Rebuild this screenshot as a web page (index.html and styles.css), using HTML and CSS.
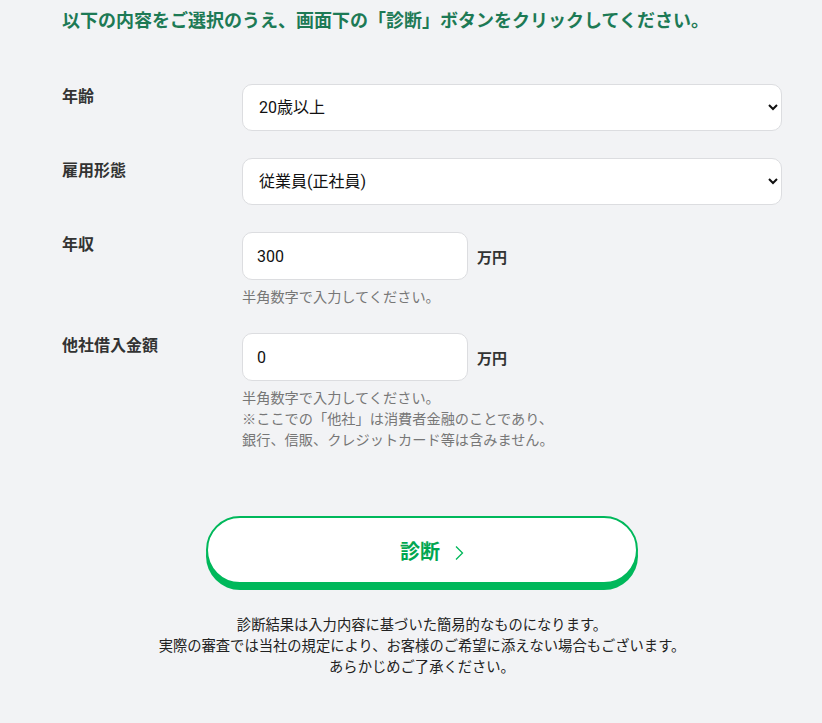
FILE: index.html
```html
<!DOCTYPE html>
<html lang="ja">
<head>
<meta charset="utf-8">
<title>診断</title>
<link rel="stylesheet" href="styles.css">
</head>
<body>
<main class="page">
  <h1 class="lead">以下の内容をご選択のうえ、画面下の「診断」ボタンをクリックしてください。</h1>

  <form class="form">
    <div class="row">
      <div class="label">年齢</div>
      <div class="field">
        <select class="select">
          <option>20歳以上</option>
        </select>
      </div>
    </div>

    <div class="row">
      <div class="label">雇用形態</div>
      <div class="field">
        <select class="select">
          <option>従業員(正社員)</option>
        </select>
      </div>
    </div>

    <div class="row row-help">
      <div class="label">年収</div>
      <div class="field">
        <div class="inline">
          <input class="input" type="text" value="300">
          <span class="unit">万円</span>
        </div>
        <p class="help">半角数字で入力してください。</p>
      </div>
    </div>

    <div class="row">
      <div class="label">他社借入金額</div>
      <div class="field">
        <div class="inline">
          <input class="input" type="text" value="0">
          <span class="unit">万円</span>
        </div>
        <p class="help">半角数字で入力してください。<br>※ここでの「他社」は消費者金融のことであり、<br>銀行、信販、クレジットカード等は含みません。</p>
      </div>
    </div>

    <div class="actions">
      <button type="button" class="btn">
        <span class="btn-text">診断</span>
        <svg class="btn-chev" width="9" height="16" viewBox="0 0 9 16" aria-hidden="true"><path d="M1 1.5 L7.5 8 L1 14.5" fill="none" stroke="#00b85b" stroke-width="1.3"/></svg>
      </button>
    </div>

    <p class="note">診断結果は入力内容に基づいた簡易的なものになります。<br>実際の審査では当社の規定により、お客様のご希望に添えない場合もございます。<br>あらかじめご了承ください。</p>
  </form>
</main>
</body>
</html>
```

FILE: styles.css
```css
html, body {
  margin: 0;
  padding: 0;
  background: #f2f3f5;
}

body {
  font-family: Roboto, "Noto Sans CJK JP", sans-serif;
  color: #333;
}

.page {
  width: 720px;
  padding: 9px 0 40px 62px;
}

.lead {
  margin: 0;
  font-size: 18px;
  line-height: 24px;
  font-weight: 700;
  color: #1d7a55;
  letter-spacing: 0;
}

.form {
  margin-top: 51px;
  width: 720px;
}

.row {
  display: flex;
  margin-bottom: 27px;
}

.row-help {
  margin-bottom: 25px;
}

.row:last-of-type {
  margin-bottom: 0;
}

.label {
  width: 180px;
  flex: none;
  font-size: 16px;
  line-height: 24px;
  padding-top: 1px;
  font-weight: 600;
  color: #333;
}

.field {
  flex: 1;
  min-width: 0;
}

.select {
  display: block;
  width: 540px;
  height: 47px;
  box-sizing: border-box;
  border: 1px solid #dcdde0;
  border-radius: 10px;
  background: #fff;
  padding: 0 4px 0 12px;
  font-family: Roboto, "Noto Sans CJK JP", sans-serif;
  font-size: 16px;
  color: #111;
}

.inline {
  display: flex;
  align-items: center;
  gap: 9px;
}

.input {
  width: 226px;
  height: 48px;
  box-sizing: border-box;
  border: 1px solid #dcdde0;
  border-radius: 10px;
  background: #fff;
  padding: 0 14px;
  font-family: Roboto, "Noto Sans CJK JP", sans-serif;
  font-size: 16px;
  color: #111;
  outline: none;
}

.unit {
  font-size: 15px;
  font-weight: 700;
  color: #333;
}

.help {
  margin: 7px 0 0;
  font-size: 14.2px;
  line-height: 21px;
  color: #777;
}

.actions {
  display: flex;
  justify-content: center;
  margin-top: 65px;
  width: 720px;
}

.btn {
  width: 432px;
  height: 68px;
  box-sizing: border-box;
  border: 2px solid #00b85b;
  border-radius: 34px;
  background: #fff;
  box-shadow: 0 6px 0 #00b85b;
  display: flex;
  align-items: center;
  justify-content: center;
  gap: 15px;
  padding: 4px 0 0 20px;
  cursor: pointer;
  font-family: Roboto, "Noto Sans CJK JP", sans-serif;
}

.btn-text {
  font-size: 20px;
  font-weight: 700;
  color: #00a651;
  line-height: 1;
}

.btn-chev {
  display: block;
  margin-top: 1px;
}

.note {
  margin: 31px 0 0;
  width: 720px;
  text-align: center;
  font-size: 14.3px;
  line-height: 21px;
  color: #222;
}
```
